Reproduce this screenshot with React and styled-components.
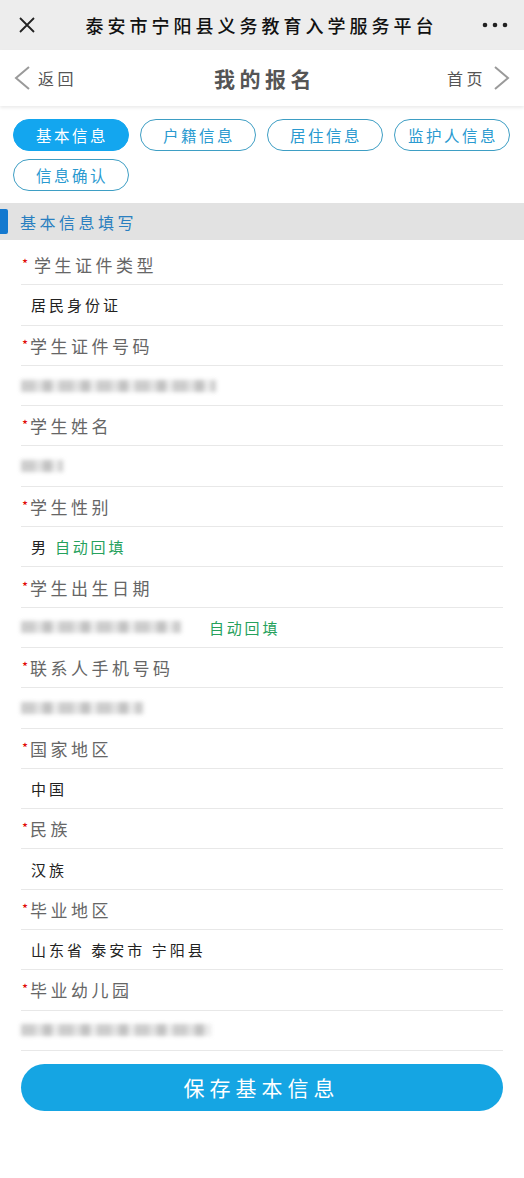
import styled, { createGlobalStyle } from "styled-components";

const GlobalStyle = createGlobalStyle`
  html, body {
    margin: 0;
    padding: 0;
    background: #ffffff;
    font-family: "Noto Sans CJK SC", "Noto Sans", "Liberation Sans", sans-serif;
  }
  * { box-sizing: border-box; }
`;

const Page = styled.div`
  width: 524px;
  min-height: 1178px;
  background: #ffffff;
`;

const TopBar = styled.div`
  height: 50px;
  background: #ededed;
  display: flex;
  align-items: center;
  padding: 0 16px 0 17px;
`;

const TopTitle = styled.div`
  flex: 1;
  text-align: center;
  font-size: 18px;
  letter-spacing: 4px;
  color: #111;
  font-weight: 500;
  padding-left: 4px;
`;

const NavBar = styled.div`
  height: 56px;
  background: #fff;
  display: flex;
  align-items: center;
  justify-content: space-between;
  padding: 0 12px;
  box-shadow: 0 2px 3px rgba(0, 0, 0, 0.08);
  position: relative;
`;

const NavSide = styled.div`
  display: flex;
  align-items: center;
  gap: 6px;
  width: 110px;
  justify-content: ${(p) => (p.$right ? "flex-end" : "flex-start")};
  font-size: 16px;
  letter-spacing: 3.5px;
  color: #555;
`;

const NavTitle = styled.div`
  font-size: 21px;
  font-weight: bold;
  letter-spacing: 4.5px;
  color: #555;
  padding-left: 6px;
`;

const Tabs = styled.div`
  display: flex;
  flex-wrap: wrap;
  gap: 8px 11px;
  padding: 13px 13px 12px;
`;

const Tab = styled.div`
  width: 116px;
  height: 32px;
  border-radius: 16px;
  display: flex;
  align-items: center;
  justify-content: center;
  font-size: 15.5px;
  letter-spacing: 2.5px;
  padding-left: 2px;
  border: 1px solid ${(p) => (p.$active ? "#13a6ef" : "#3e9ec4")};
  background: ${(p) => (p.$active ? "#13a6ef" : "#fff")};
  color: ${(p) => (p.$active ? "#fff" : "#2a9ad0")};
`;

const SectionHeader = styled.div`
  height: 37px;
  background: #e2e2e2;
  display: flex;
  align-items: center;
  gap: 12px;
  font-size: 16px;
  letter-spacing: 3.5px;
  color: #2a7fc0;
`;

const SectionBar = styled.span`
  width: 8px;
  height: 25px;
  background: #1479cf;
  border-radius: 0 2px 2px 0;
`;

const FieldList = styled.div`
  margin: 5px 21px 0;
`;

const Row = styled.div`
  height: 40.3px;
  display: flex;
  align-items: center;
  border-bottom: 1px solid #e8e8e8;
`;

const LabelRow = styled(Row)`
  padding-left: 1px;
  font-size: 17px;
  letter-spacing: 3.5px;
  color: #666;
`;

const Star = styled.span`
  color: #e00000;
  font-size: 13px;
  letter-spacing: 0;
  margin-right: ${(p) => (p.$gap ? "6px" : "2px")};
  position: relative;
  top: -1px;
`;

const ValueRow = styled(Row)`
  padding-left: 10px;
  font-size: 15px;
  letter-spacing: 3px;
  color: #222;
`;

const AutoFill = styled.span`
  color: #26a15c;
  font-size: 15px;
  letter-spacing: 2.8px;
  margin-left: ${(p) => p.$gap || "6px"};
`;

const Mask = styled.span`
  display: inline-block;
  height: 12px;
  margin-left: ${(p) => p.$offset || "0px"};
  background: repeating-linear-gradient(
    90deg,
    #c4c4c4 0 14px,
    #dcdcdc 14px 22px,
    #b8b8b8 22px 31px,
    #e6e6e6 31px 38px
  );
  filter: blur(2px);
  opacity: 0.85;
`;

const SaveButton = styled.button`
  display: block;
  width: calc(100% - 42px);
  height: 47px;
  margin: 13px 21px 0;
  border: none;
  border-radius: 24px;
  background: #15a5e3;
  color: #fff;
  font-family: inherit;
  font-size: 21px;
  letter-spacing: 5px;
  padding-left: 5px;
`;

const Chevron = ({ dir }) => (
  <svg width="20" height="26" viewBox="0 0 20 26">
    <path
      d={dir === "left" ? "M17 2 L4 13 L17 24" : "M3 2 L16 13 L3 24"}
      fill="none"
      stroke="#9a9a9a"
      strokeWidth="2"
    />
  </svg>
);

const CloseIcon = () => (
  <svg width="20" height="20" viewBox="0 0 20 20">
    <path d="M3 3 L17 17 M17 3 L3 17" stroke="#222" strokeWidth="1.8" />
  </svg>
);

const MoreIcon = () => (
  <svg width="26" height="8" viewBox="0 0 26 8">
    <circle cx="3" cy="4" r="2.3" fill="#222" />
    <circle cx="13" cy="4" r="2.3" fill="#222" />
    <circle cx="23" cy="4" r="2.3" fill="#222" />
  </svg>
);

const tabs = ["基本信息", "户籍信息", "居住信息", "监护人信息", "信息确认"];

const fields = [
  { label: "学生证件类型", value: "居民身份证", gap: true },
  { label: "学生证件号码", mask: 195 },
  { label: "学生姓名", mask: 42 },
  { label: "学生性别", value: "男", auto: true },
  { label: "学生出生日期", mask: 160, auto: true, autoGap: "28px" },
  { label: "联系人手机号码", mask: 122 },
  { label: "国家地区", value: "中国" },
  { label: "民族", value: "汉族" },
  { label: "毕业地区", value: "山东省 泰安市 宁阳县" },
  { label: "毕业幼儿园", mask: 190 },
];

export default function App() {
  return (
    <Page>
      <GlobalStyle />
      <TopBar>
        <CloseIcon />
        <TopTitle>泰安市宁阳县义务教育入学服务平台</TopTitle>
        <MoreIcon />
      </TopBar>
      <NavBar>
        <NavSide>
          <Chevron dir="left" />
          返回
        </NavSide>
        <NavTitle>我的报名</NavTitle>
        <NavSide $right>
          首页
          <Chevron dir="right" />
        </NavSide>
      </NavBar>
      <Tabs>
        {tabs.map((t, i) => (
          <Tab key={t} $active={i === 0}>
            {t}
          </Tab>
        ))}
      </Tabs>
      <SectionHeader>
        <SectionBar />
        基本信息填写
      </SectionHeader>
      <FieldList>
        {fields.map((f) => (
          <div key={f.label}>
            <LabelRow>
              <Star $gap={f.gap}>*</Star>
              {f.label}
            </LabelRow>
            <ValueRow>
              {f.mask ? <Mask style={{ width: f.mask }} $offset="-10px" /> : f.value}
              {f.auto && <AutoFill $gap={f.autoGap}>自动回填</AutoFill>}
            </ValueRow>
          </div>
        ))}
      </FieldList>
      <SaveButton>保存基本信息</SaveButton>
    </Page>
  );
}
